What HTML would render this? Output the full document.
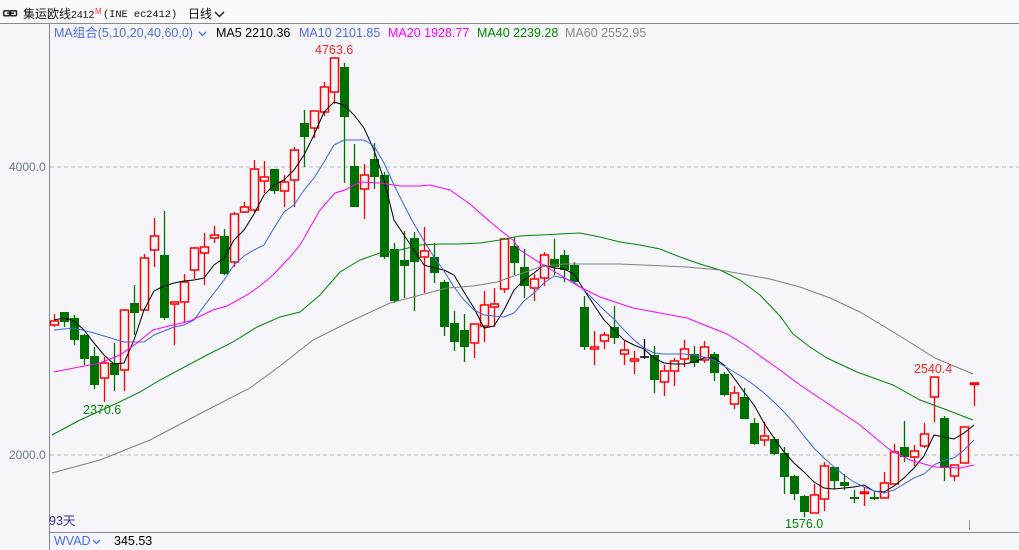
<!DOCTYPE html>
<html><head><meta charset="utf-8"><style>
body{margin:0;width:1019px;height:550px;overflow:hidden;background:#f5f5fa;font-family:"Liberation Sans","Noto Sans CJK SC",sans-serif;position:relative}
.t{position:absolute;white-space:nowrap;font-size:13px;line-height:16px}
.m{font-family:"Liberation Mono",monospace;font-size:10.3px}
</style></head><body>
<div style="position:absolute;left:0;top:0;width:1019px;height:23px;background:#fafafb"></div>
<svg style="position:absolute;left:0;top:0" width="1019" height="550" id="s"></svg>
<svg style="position:absolute;left:3px;top:10px" width="15" height="7"><rect x="0.75" y="0.75" width="6" height="5" rx="1" fill="none" stroke="#222" stroke-width="1.5"/><rect x="7.5" y="0.75" width="6" height="5" rx="1" fill="none" stroke="#222" stroke-width="1.5"/><line x1="4" y1="3.25" x2="11" y2="3.25" stroke="#222" stroke-width="1.5"/></svg>
<div class="t" style="left:23px;top:6px;color:#111;font-size:12px">集运欧线</div>
<div class="t" style="left:71px;top:7px;color:#111;font-size:10.5px">2412</div>
<div class="t" style="left:95px;top:4px;color:#f33;font-size:8px">M</div>
<div class="t m" style="left:103px;top:7px;color:#111">(INE ec2412)</div>
<div class="t" style="left:188px;top:6px;color:#111;font-size:12px">日线</div>
<svg style="position:absolute;left:214px;top:11px" width="11" height="7"><polyline points="1,1 5.5,5.5 10,1" fill="none" stroke="#222" stroke-width="1.5"/></svg>
<div class="t" style="left:54px;top:25px;font-size:12.5px;color:#4a6ee0">MA组合(5,10,20,40,60,0)</div>
<svg style="position:absolute;left:198px;top:31px" width="9" height="6"><polyline points="1,1 4.5,4.5 8,1" fill="none" stroke="#4a6ee0" stroke-width="1.3"/></svg>
<div class="t" style="left:216px;top:25px;font-size:12.5px;color:#000">MA5 2210.36</div>
<div class="t" style="left:299px;top:25px;font-size:12.5px;color:#4a6ee0">MA10 2101.85</div>
<div class="t" style="left:388px;top:25px;font-size:12.5px;color:#f0f">MA20 1928.77</div>
<div class="t" style="left:477px;top:25px;font-size:12.5px;color:#080">MA40 2239.28</div>
<div class="t" style="left:565px;top:25px;font-size:12.5px;color:#888">MA60 2552.95</div>
<div class="t" style="left:9px;top:159px;font-size:12px;color:#6a7a90">4000.0</div>
<div class="t" style="left:9px;top:447px;font-size:12px;color:#6a7a90">2000.0</div>
<div class="t" style="left:315px;top:42px;font-size:12.5px;color:#f22">4763.6</div>
<div class="t" style="left:83px;top:402px;font-size:12.5px;color:#080">2370.6</div>
<div class="t" style="left:785px;top:516px;font-size:12.5px;color:#080">1576.0</div>
<div class="t" style="left:914px;top:361px;font-size:12.5px;color:#f22">2540.4</div>
<div class="t" style="left:49px;top:513px;font-size:12.5px;color:#3030a0">93天</div>
<div class="t" style="left:54px;top:533px;font-size:12.5px;color:#4a6ee0">WVAD</div>
<svg style="position:absolute;left:92px;top:539px" width="9" height="6"><polyline points="1,1 4.5,4.5 8,1" fill="none" stroke="#4a6ee0" stroke-width="1.3"/></svg>
<div class="t" style="left:114px;top:533px;font-size:12.5px;color:#000">345.53</div>
<script>
var C=[[54,321,325,314,327,1],[64,312,322,312,327,0],[74,318,340,315,345,0],[84,335,359,334,365,0],[94,356,385,347,389,0],[104,363,378,357,402,1],[114,363,375,343,391,0],[124,310,370,310,391,1],[134,303,313,285,335,0],[144,258,310,254,310,1],[154,236,250,218,267,1],[164,255,318,211,320,0],[174,302,304,302,345,1],[184,282,302,274,323,1],[194,248,270,247,279,1],[204,247,253,233,285,1],[214,235,238,226,243,1],[224,236,274,229,275,0],[234,214,262,212,267,1],[244,207,212,202,213,1],[254,169,210,160,213,1],[264,177,181,161,193,1],[274,169,191,169,194,0],[284,182,191,175,207,1],[294,150,180,147,207,1],[304,123,137,110,167,0],[314,111,128,111,138,1],[324,87,112,82,116,1],[334,58,92,57,104,1],[344,67,117,63,183,0],[354,166,207,144,207,0],[364,175,189,164,219,1],[374,159,177,143,189,0],[384,175,257,172,259,0],[394,249,301,243,303,0],[404,260,266,231,298,0],[414,238,262,232,311,0],[424,251,257,227,293,1],[434,257,273,243,283,0],[444,282,327,280,336,0],[454,323,342,311,351,0],[464,330,347,314,362,0],[474,324,343,324,358,1],[484,305,326,291,342,1],[494,304,307,288,327,1],[504,239,289,238,293,1],[514,246,263,237,275,0],[524,267,286,249,298,0],[534,279,288,274,301,1],[544,255,278,252,286,1],[554,259,267,239,275,0],[564,255,270,250,282,0],[574,265,282,262,284,0],[584,307,347,296,350,0],[594,347,349,331,365,1],[604,335,341,332,349,1],[614,327,338,306,344,0],[624,350,354,341,365,1],[634,359,361,351,374,1],[644,357,358,339,359,2],[654,355,380,346,393,0],[664,371,382,365,396,1],[674,361,371,358,386,1],[684,349,359,340,367,1],[694,354,363,346,367,0],[704,347,360,341,363,1],[714,354,373,352,381,0],[724,374,395,372,396,0],[734,393,404,386,409,1],[744,397,419,388,419,0],[754,423,444,418,445,0],[764,436,440,422,446,1],[774,439,454,437,455,0],[784,453,477,447,494,0],[794,476,494,475,500,0],[804,496,512,495,517,0],[814,495,513,484,513,1],[824,466,499,462,511,1],[834,467,481,467,489,0],[844,482,486,474,490,0],[854,497,499,490,503,0],[864,492,493,487,506,1],[874,497,499,491,500,0],[884,483,498,472,498,1],[894,452,484,444,484,1],[904,447,457,421,462,0],[914,451,457,445,466,1],[924,434,446,423,448,1],[934,377,397,377,422,1],[944,418,468,416,481,0],[954,465,476,465,481,1],[964,427,463,427,463,1],[974,383,384,383,406,1]];
var L={
k:"#000:54,320 64,318 74,321 84,330 94,343 104,355 114,364 124,363 134,340 144,310 154,291 164,286 174,283 184,281 194,280 204,278 214,265 224,258 234,240 244,230 254,214 264,195 274,185 284,180 294,170 304,155 314,135 324,112 334,102 344,105 354,115 364,128 374,150 384,180 394,220 404,235 414,250 424,265 434,268 444,270 454,275 464,292 474,308 484,328 494,326 504,310 514,290 524,280 534,273 544,265 554,268 564,269 574,274 584,290 594,305 604,320 614,330 624,340 634,345 644,349 654,358 664,363 674,364 684,364 694,362 704,358 714,358 724,365 734,378 744,392 754,405 764,423 774,438 784,452 794,463 804,472 814,482 824,488 834,489 844,488 854,487 864,485 874,491 884,492 894,486 904,478 914,468 924,456 934,435 944,437 954,439 964,433 974,425",
b:"#3c66e0:54,330 74,328 94,333 104,336 124,342 144,342 154,335 174,327 184,325 194,320 204,306 214,293 224,280 234,265 244,256 254,250 264,245 274,228 284,212 294,205 304,190 314,178 324,162 334,145 344,140 354,140 364,140 374,146 384,163 394,185 404,205 414,224 424,241 434,257 444,271 454,287 464,300 474,310 484,315 494,316 504,317 514,313 524,301 534,293 544,283 554,276 564,278 574,282 584,290 594,300 604,310 614,319 624,330 634,340 644,348 654,353 664,354 674,354 684,354 694,355 704,357 714,360 724,366 734,372 744,378 754,385 764,393 774,402 784,412 794,423 804,436 814,448 824,458 834,467 844,475 854,482 864,487 874,491 884,493 894,490 904,484 914,478 924,474 934,465 944,460 954,458 964,450 974,440",
m:"#f0f:54,372 74,368 100,363 120,355 137,343 153,330 173,325 190,321 213,310 227,306 247,295 260,286 273,275 290,257 300,245 320,210 335,193 345,190 360,182 380,183 400,186 420,186 430,185 450,190 470,204 480,213 500,230 513,240 520,250 540,263 560,275 580,287 600,297 633,308 660,313 687,318 707,326 727,334 745,345 760,356 780,370 800,385 830,405 860,425 890,450 910,460 935,467 960,468 974,465",
g:"#080:52,435 80,420 113,405 140,392 160,380 207,355 233,342 257,327 280,317 300,312 320,295 340,272 360,260 380,253 400,250 420,245 440,244 460,244 480,243 500,240 520,236 540,235 560,234 580,233 600,237 620,242 640,245 660,249 680,257 700,264 720,270 740,280 760,295 780,316 793,334 810,347 827,358 857,372 893,385 920,400 947,410 973,420",
y:"#808080:52,473 100,460 150,440 207,410 250,388 280,366 313,340 347,323 390,303 413,297 447,288 473,286 497,282 520,274 540,267 563,264 620,264 687,267 720,270 770,279 800,287 830,298 860,312 880,324 903,338 935,358 973,374"};
var h='<line x1="0" y1="23.5" x2="1019" y2="23.5" stroke="#8a8a8a"/><line x1="49.5" y1="24" x2="49.5" y2="550" stroke="#888"/><line x1="49" y1="532.5" x2="1019" y2="532.5" stroke="#888"/>';
h+='<line x1="50" y1="167" x2="1019" y2="167" stroke="#bbb" stroke-dasharray="4,3"/><line x1="50" y1="455" x2="1019" y2="455" stroke="#bbb" stroke-dasharray="4,3"/>';
h+='<line x1="969.5" y1="520" x2="969.5" y2="530" stroke="#999"/>';
C.forEach(function(c){var x=c[0],col=c[5]==1?"#f00":(c[5]==2?"#000":"#007000");
h+='<line x1="'+(x+.5)+'" y1="'+c[3]+'" x2="'+(x+.5)+'" y2="'+c[4]+'" stroke="'+col+'" stroke-width="1.3"/>';
var hh=Math.max(c[2]-c[1],1.5);
if(c[5]==1)h+='<rect x="'+(x-3.5)+'" y="'+c[1]+'" width="8" height="'+hh+'" fill="#f5f5fa" stroke="#f00" stroke-width="1.5"/>';
else if(c[5]==0)h+='<rect x="'+(x-4)+'" y="'+c[1]+'" width="9" height="'+hh+'" fill="#007000"/>';
else h+='<line x1="'+(x-4)+'" y1="'+c[1]+'" x2="'+(x+5)+'" y2="'+c[1]+'" stroke="#000" stroke-width="1.5"/>';});
for(var k in L){var p=L[k].split(":");h+='<polyline points="'+p[1]+'" fill="none" stroke="'+p[0]+'" stroke-width="1"/>';}
document.getElementById("s").innerHTML=h;
</script>
</body></html>
